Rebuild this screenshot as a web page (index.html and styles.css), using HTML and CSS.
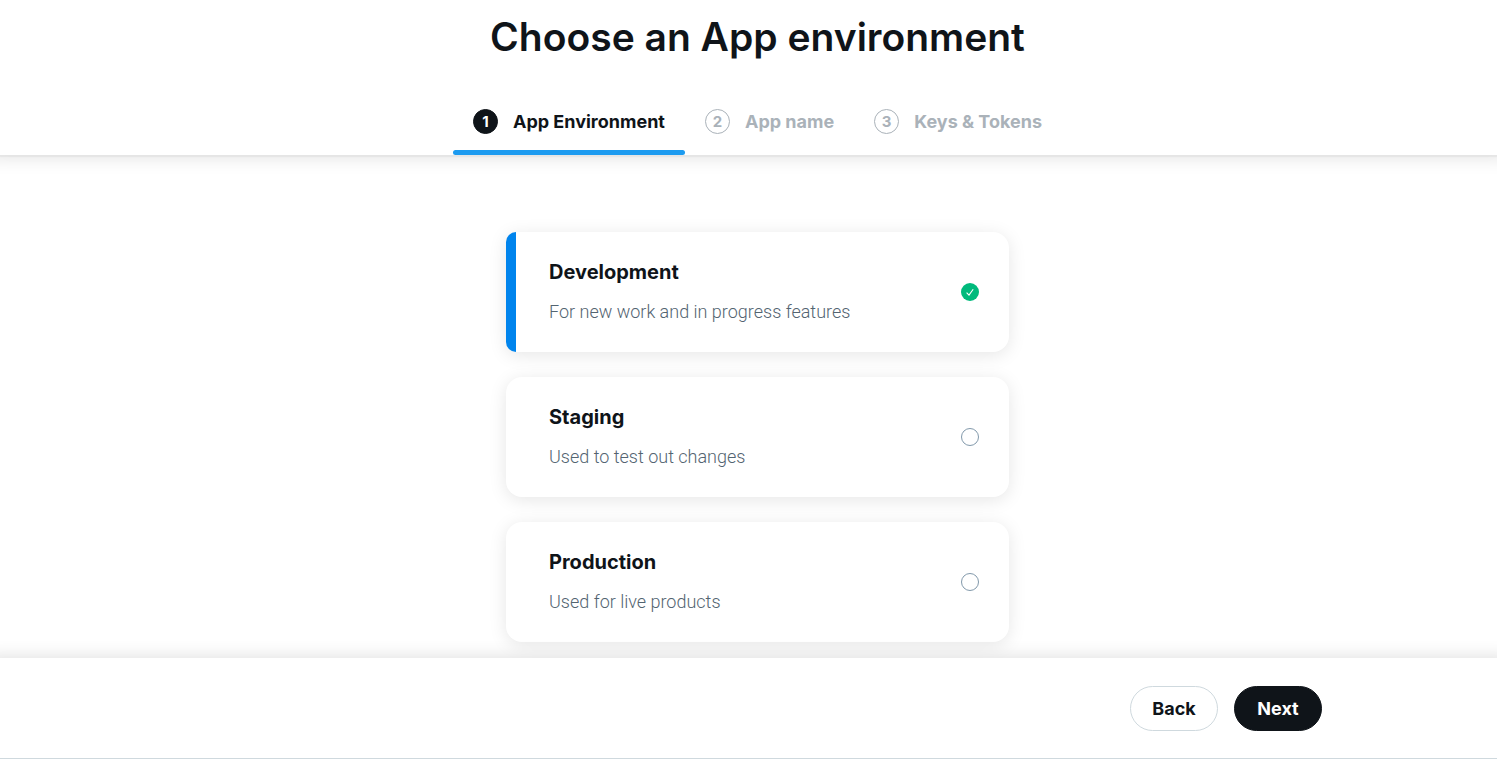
FILE: index.html
```html
<!DOCTYPE html>
<html lang="en">
<head>
<meta charset="utf-8">
<meta name="viewport" content="width=device-width, initial-scale=1">
<title>Choose an App environment</title>
<link rel="stylesheet" href="styles.css">
</head>
<body>
<div class="page">
  <header class="header">
    <h1 class="title">Choose an App environment</h1>
    <ol class="steps">
      <li class="step step-current" aria-current="step"><span class="step-number">1</span><span class="step-label">App Environment</span></li>
      <li class="step"><span class="step-number">2</span><span class="step-label">App name</span></li>
      <li class="step"><span class="step-number">3</span><span class="step-label">Keys &amp; Tokens</span></li>
    </ol>
  </header>
  <main class="main">
    <form class="options" id="environment">
      <label class="card" for="env-dev">
        <span class="card-text">
          <span class="card-title">Development</span>
          <span class="card-description">For new work and in progress features</span>
        </span>
        <span class="choice">
          <input class="radio" type="radio" name="env" id="env-dev" checked>
          <svg class="check" viewBox="0 0 18 18" aria-hidden="true"><circle cx="9" cy="9" r="9"/><path d="M5.6 9.6 8 12.1 12.2 6.2"/></svg>
        </span>
      </label>
      <label class="card" for="env-staging">
        <span class="card-text">
          <span class="card-title">Staging</span>
          <span class="card-description">Used to test out changes</span>
        </span>
        <span class="choice">
          <input class="radio" type="radio" name="env" id="env-staging">
          <svg class="check" viewBox="0 0 18 18" aria-hidden="true"><circle cx="9" cy="9" r="9"/><path d="M5.6 9.6 8 12.1 12.2 6.2"/></svg>
        </span>
      </label>
      <label class="card" for="env-production">
        <span class="card-text">
          <span class="card-title">Production</span>
          <span class="card-description">Used for live products</span>
        </span>
        <span class="choice">
          <input class="radio" type="radio" name="env" id="env-production">
          <svg class="check" viewBox="0 0 18 18" aria-hidden="true"><circle cx="9" cy="9" r="9"/><path d="M5.6 9.6 8 12.1 12.2 6.2"/></svg>
        </span>
      </label>
    </form>
  </main>
  <footer class="footer">
    <button class="button" type="button">Back</button>
    <button class="button button-primary" type="submit" form="environment">Next</button>
  </footer>
</div>
</body>
</html>
```
FILE: styles.css
```css
* { box-sizing: border-box; }

body {
  margin: 0;
  background: #fff;
  color: #0f1419;
  font-family: Inter, "Liberation Sans", sans-serif;
  font-size: 18px;
  line-height: 24px;
}

.page {
  display: flex;
  flex-direction: column;
  min-height: 100vh;
  padding-bottom: 5px;
  overflow-x: clip;
}

.header {
  display: flex;
  flex-direction: column;
  align-items: center;
  padding: 13px 0 0 18px;
  box-shadow: 0 2px 1px rgba(15, 30, 30, 0.04), 0 -10px 18px 12px rgba(0, 0, 0, 0.12);
}

.title {
  margin: 0;
  font-size: 39px;
  font-weight: 600;
  line-height: 48px;
}

.steps {
  display: flex;
  margin: 27px 0 0;
  padding: 0;
  list-style: none;
}

.step {
  display: flex;
  flex-direction: row;
  align-items: center;
  gap: 15px;
  position: relative;
  height: 67px;
  padding: 0 20px;
  color: #aab2b9;
  font-weight: 700;
}

.step-current { color: #0f1419; }

.step-current::after {
  content: "";
  position: absolute;
  inset: auto 0 0;
  height: 5px;
  border-radius: 3px;
  background: #1d9bf0;
}

.step-number {
  display: grid;
  place-items: center;
  width: 25px;
  height: 25px;
  border: 1px solid #aab2b9;
  border-radius: 50%;
  font-size: 15px;
}

.step-current .step-number {
  border-color: #0f1419;
  background: #0f1419;
  color: #fff;
}

.main {
  flex: 1;
  padding: 77px 0 16px 18px;
}

.options {
  display: grid;
  gap: 25px;
  max-width: 503px;
  margin: 0 auto;
}

.card {
  display: flex;
  align-items: center;
  justify-content: space-between;
  min-height: 120px;
  padding: 0 30px 0 33px;
  border-left: 10px solid transparent;
  border-radius: 16px;
  background: #fff border-box;
  box-shadow: 0 3px 18px rgba(0, 0, 0, 0.1);
  cursor: pointer;
}

.card:has(.radio:checked) {
  border-left-color: #0084ed;
  border-radius: 10px 16px 16px 10px;
}

.card-text {
  display: grid;
  gap: 16px;
}

.card-title {
  font-size: 20px;
  font-weight: 700;
}

.card-description {
  color: #536471;
  font-family: Roboto, "Liberation Sans", sans-serif;
  font-weight: 300;
}

.choice { display: grid; }

.radio,
.check {
  grid-area: 1 / 1;
  width: 18px;
  height: 18px;
  margin: 0;
}

.radio {
  appearance: none;
  border: 1px solid #8299ab;
  border-radius: 50%;
}

.check {
  display: none;
  fill: #00ba7c;
}

.check path {
  fill: none;
  stroke: #fff;
  stroke-width: 1.1;
}

.radio:checked + .check { display: block; }
.radio:checked { border-color: transparent; }

.footer {
  display: flex;
  justify-content: flex-end;
  gap: 16px;
  position: relative;
  padding: 28px 175px 27px 24px;
  border-bottom: 1px solid #cfd9de;
  background: #fff;
  box-shadow: 0 10px 16px 12px rgba(0, 0, 0, 0.12);
  clip-path: inset(-24px 0 0);
}

.button {
  min-width: 88px;
  height: 45px;
  padding: 0 20px;
  border: 1px solid #cfd9de;
  border-radius: 23px;
  background: #fff;
  color: #0f1419;
  font: 700 18px/24px Inter, "Liberation Sans", sans-serif;
  cursor: pointer;
}

.button-primary {
  border-color: #0f1419;
  background: #0f1419;
  color: #fff;
}
```
